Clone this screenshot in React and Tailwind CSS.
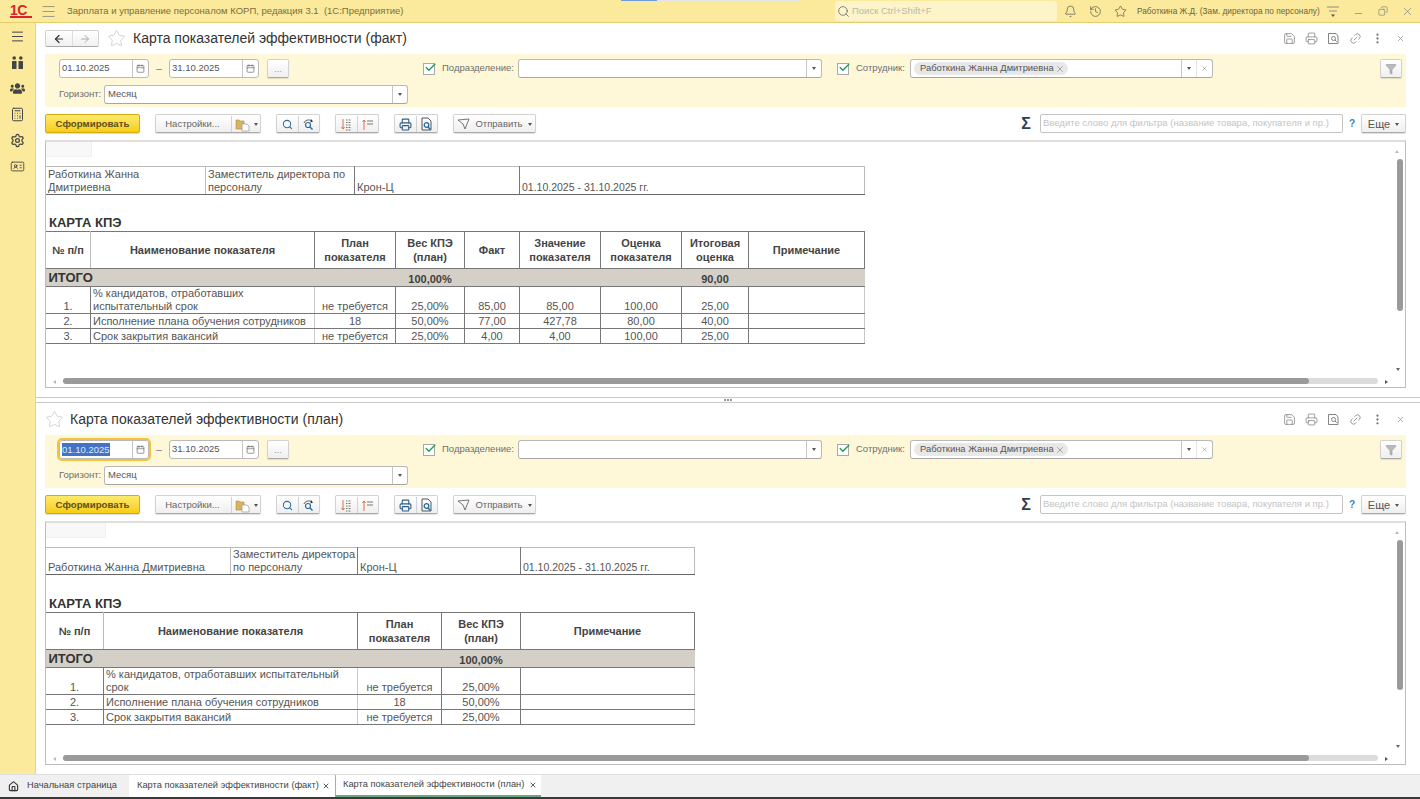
import React from "react";
import { Menu, Bell, History, Star, Search, Save, Printer, Link2, EllipsisVertical, X, Calendar, Funnel, House, ArrowLeft, ArrowRight, Minus, Copy, Calculator, Settings, IdCard, Check } from "lucide-react";
import { FaUsers } from "react-icons/fa";

const Caret = () => <span className="inline-block w-0 h-0 border-l-[2.5px] border-r-[2.5px] border-t-[3px] border-l-transparent border-r-transparent border-t-[#555]" />;

const Field = ({ cls, text, pill, clear }) => (
  <div className={`${cls} h-[19px] flex items-stretch bg-white rounded-[3px] border border-[#b9b9b9] border-b-[#a5a5a5] text-[9.5px] text-[#555]`}>
    <div className="flex-1 min-w-0 flex items-center pl-[2px]">
      {pill && (
        <span className="ml-[1px] h-[13px] pl-[6px] pr-[3px] rounded-full bg-[#e8e8e8] flex items-center gap-[1px] text-[9.4px] text-[#555] whitespace-nowrap">
          Работкина Жанна Дмитриевна <X size={10} strokeWidth={1.1} className="text-[#555]" />
        </span>
      )}
      {text && <span className="pl-[1px] whitespace-nowrap">{text}</span>}
    </div>
    <div className="w-[15px] border-l border-[#c5c5c5] flex items-center justify-center"><Caret /></div>
    {clear && (
      <div className="w-[16px] border-l border-[#e4e4e4] flex items-center justify-center"><X size={7} strokeWidth={1.6} className="text-[#777]" /></div>
    )}
  </div>
);

const DateField = ({ cls, value, focus }) => (
  <div className={`${cls} h-[19px] flex items-stretch bg-white rounded-[3px] border border-[#b9b9b9] text-[9.5px] text-[#555] ${focus ? "outline-2 outline-[#f5c33b]" : ""}`}>
    <div className="flex-1 flex items-center pl-[2px]">
      <span className={focus ? "bg-[#4472c4] text-[#dfe8fa] leading-[13px]" : ""}>{value}</span>
    </div>
    <div className="w-[16px] border-l border-[#c5c5c5] flex items-center justify-center"><Calendar size={9} strokeWidth={1.8} className="text-[#666]" /></div>
  </div>
);

const Check1 = ({ cls }) => (
  <div className={`${cls} w-[12px] h-[12px] bg-white border border-[#a9a9a9] relative shrink-0`}>
    <Check size={13} strokeWidth={2.4} className="absolute -top-[3px] left-0 text-[#1b9b52]" />
  </div>
);

const btn = "h-[19px] shrink-0 pt-[1px] rounded-[2px] border border-[#d2d2d2] border-b-[#a9a9a9] bg-gradient-to-b from-white to-[#efefef] shadow-[0_1px_1px_rgba(0,0,0,0.12)] flex text-[9.5px] text-[#666]";

const Pair = ({ cls, a, b }) => (
  <div className={`${btn} items-stretch ${cls}`}>
    <div className="flex-1 flex items-center justify-center">{a}</div>
    <div className="flex-1 border-l border-[#d2d2d2] flex items-center justify-center">{b}</div>
  </div>
);

const SortDown = () => (
  <svg width="13" height="13" viewBox="0 0 13 13" fill="none">
    <path d="M3 1v10M1.500 9 3 11l1.500-2" stroke="#e0703c" strokeWidth="1" />
    <path d="M6 2h5M6 4.500h5M6 7h5M6 9.500h5M6 12h5" stroke="#777" strokeWidth="1" strokeDasharray="1 0.500" />
  </svg>
);
const SortUp = () => (
  <svg width="13" height="13" viewBox="0 0 13 13" fill="none">
    <path d="M3 12V2M1.500 4 3 2l1.500 2" stroke="#e0703c" strokeWidth="1" />
    <path d="M6 3h6M6 6h6" stroke="#777" strokeWidth="1" />
  </svg>
);
const FolderDoc = () => (
  <svg width="15" height="15" viewBox="0 0 15 15" fill="none">
    <path d="M1 3h3l1 1h4v8H1z" fill="#d9b45f" stroke="#b08d3f" strokeWidth="0.600" />
    <path d="M7 7h5l2 2v5H7z" fill="#fff" stroke="#999" strokeWidth="0.700" />
  </svg>
);
const Refind = () => (
  <svg width="13" height="13" viewBox="0 0 13 13" fill="none">
    <circle cx="6" cy="7" r="2.500" stroke="#2c6c9c" strokeWidth="1.200" />
    <path d="m8 9 2.500 2.500" stroke="#2c6c9c" strokeWidth="1.400" />
    <path d="M2 5C3 2 7 1 10 3" stroke="#555" strokeWidth="1" />
    <path d="m9 1 2 2.500-2.500 1z" fill="#333" />
  </svg>
);
const PrintBlue = () => <Printer size={13} strokeWidth={2} className="text-[#2f5f88]" />;
const Preview = () => (
  <svg width="13" height="14" viewBox="0 0 13 14" fill="none">
    <path d="M2 1h6l3 3v9H2z" stroke="#555" strokeWidth="1" />
    <circle cx="6.500" cy="8" r="2.300" stroke="#1f6f9f" strokeWidth="1.300" />
    <path d="m8 10 2.500 2.500" stroke="#1f6f9f" strokeWidth="1.500" />
  </svg>
);
const PreviewGrey = () => (
  <svg width="13" height="13" viewBox="0 0 13 13" fill="none">
    <path d="M9 1.500H1.500v10H11V4z" stroke="#777" strokeWidth="0.900" />
    <circle cx="6.500" cy="6.500" r="2" stroke="#777" strokeWidth="0.900" />
    <path d="m8 8 1.800 1.800" stroke="#777" strokeWidth="0.900" />
  </svg>
);
const GiftIcon = () => (
  <svg width="15" height="15" viewBox="0 0 15 15" fill="#444">
    <rect x="2" y="6" width="4.500" height="8" rx="0.500" />
    <rect x="8.500" y="6" width="4.500" height="8" rx="0.500" />
    <circle cx="4.200" cy="3" r="1.800" />
    <circle cx="10.800" cy="3" r="1.800" />
  </svg>
);
const DownLines = () => (
  <svg width="12" height="14" viewBox="0 0 12 14" fill="none" stroke="#777" strokeWidth="0.800">
    <path d="M0 3h12M2 7h8" />
    <path d="M4 10.500h4L6 13z" fill="#555" stroke="none" />
  </svg>
);

const SendIcon = () => (
  <svg width="13" height="12" viewBox="0 0 13 12" fill="none"><path d="M1 2 12 1 8 11 6 6z" stroke="#666" strokeWidth="0.900" /></svg>
);

const Toolbar = () => (
  <div className="h-[19px] flex items-stretch">
    <div className="w-[95px] shrink-0 h-[19px] pt-[1px] rounded-[2px] border border-[#d3ac14] bg-gradient-to-b from-[#fdea6a] to-[#f7cd00] shadow-[0_1px_1px_rgba(0,0,0,0.15)] flex items-center justify-center text-[9.7px] text-[#5f5018] font-bold">Сформировать</div>
    <div className={`${btn} items-stretch ml-[15px] w-[106px]`}>
      <div className="w-[75px] pr-[2px] flex items-center justify-center">Настройки...</div>
      <div className="flex-1 border-l border-[#d2d2d2] flex items-center justify-center gap-[4px]"><FolderDoc /><Caret /></div>
    </div>
    <Pair cls="ml-[15px] w-[44px]" a={<Search size={11} strokeWidth={2.2} className="text-[#2c6c9c]" />} b={<Refind />} />
    <Pair cls="ml-[15px] w-[44px]" a={<SortDown />} b={<SortUp />} />
    <Pair cls="ml-[15px] w-[44px]" a={<PrintBlue />} b={<Preview />} />
    <div className={`${btn} items-center ml-[15px] w-[83px] justify-center gap-[5px]`}><SendIcon /><span>Отправить</span><Caret /></div>
    <div className="ml-[480px] w-[20px] shrink-0 flex items-center justify-center text-[16px] leading-none text-[#2f3f4f] font-semibold">Σ</div>
    <div className="ml-[4px] w-[303px] shrink-0 h-[19px] border border-[#c4c4c4] rounded-[2px] bg-white flex items-center pl-[2px] text-[9.5px] text-[#c4c4c4] whitespace-nowrap">Введите слово для фильтра (название товара, покупателя и пр.)</div>
    <div className="w-[18px] shrink-0 flex items-center justify-center text-[10px] font-bold text-[#3a7fc2]">?</div>
    <div className={`${btn} items-center w-[45px] justify-center gap-[5px]`}><span className="text-[11px] text-[#555]">Еще</span><Caret /></div>
  </div>
);

const Band = ({ focus }) => (
  <div className="h-[53px] bg-[#fef8d8] pt-[5px] pl-[14px] pr-[4px]">
    <div className="flex items-center h-[19px]">
      <DateField cls="w-[90px]" value="01.10.2025" focus={focus} />
      <span className="w-[20px] text-center text-[10px] text-[#777]">–</span>
      <DateField cls="w-[90px]" value="31.10.2025" />
      <div className={`${btn} items-center ml-[8px] w-[22px] justify-center text-[#999]`}>...</div>
      <Check1 cls="ml-[134px]" />
      <span className="ml-[7px] w-[76px] text-[9.5px] text-[#6f6f6f] whitespace-nowrap">Подразделение:</span>
      <Field cls="w-[304px]" />
      <Check1 cls="ml-[15px]" />
      <span className="ml-[7px] w-[54px] text-[9.5px] text-[#6f6f6f]">Сотрудник:</span>
      <Field cls="w-[303px]" pill clear />
      <div className={`${btn} items-center ml-[167px] w-[22px] justify-center`}><Funnel size={12} strokeWidth={1} className="text-[#888] fill-[#bbb]" /></div>
    </div>
    <div className="flex items-center h-[19px] mt-[7px]">
      <span className="w-[45px] text-[9.5px] text-[#6f6f6f]">Горизонт:</span>
      <Field cls="w-[304px]" text="Месяц" />
    </div>
  </div>
);

const bd = "border border-[#777]";
const bl = "border border-[#c9c9c9] border-b-[#777]";

const InfoTable = ({ widths, h, cells }) => (
  <table className="-ml-[1px] table-fixed border-collapse text-[11px] leading-[13px] text-[#555]">
    <colgroup>{widths.map((w) => <col key={w} className={w} />)}</colgroup>
    <tbody>
      <tr className={h}>
        {cells.map((c, i) => (
          <td key={i} className={`${i === 1 || i === 2 ? "border-t border-b border-x border-t-[#bbb] border-b-[#666] border-x-[#777]" : "border-t border-b border-x border-t-[#bbb] border-b-[#666] border-x-[#bbb]"} align-bottom px-[2px] pb-0`}>{c}</td>
        ))}
      </tr>
    </tbody>
  </table>
);

const KpiTable = ({ widths, head, total, rows }) => (
  <table className="-ml-[1px] table-fixed border-collapse text-[11px] leading-[13px] text-[#555]">
    <colgroup>{widths.map((w) => <col key={w} className={w} />)}</colgroup>
    <tbody>
      <tr className="h-[37px]">
        {head.map((c, i) => (
          <td key={i} className={`${bd} ${i === 0 ? "border-r-[#bbb]" : ""} text-center align-middle font-bold text-[#444] leading-[14px] px-[1px]`}>{c}</td>
        ))}
      </tr>
      <tr className="h-[18px] bg-[#d4d0c8]">
        {total.map((c, i) => (
          <td key={i} colSpan={c.span || 1} className={`border-t border-b border-[#777] align-bottom font-bold text-[#3f3f3f] ${c.big ? "text-[13px] leading-[16px] text-[#333] text-left pl-[3px]" : "text-center"}`}>{c.t}</td>
        ))}
      </tr>
      {rows.map((r, ri) => (
        <tr key={ri} className={ri === 0 ? "h-[27px]" : "h-[15px]"}>
          {r.map((c, i) => (
            <td key={i} className={`${bl} ${i > 1 && i < r.length - 1 ? "border-x-[#777]" : ""} ${i === 0 ? "border-r-[#777]" : ""} ${ri === 2 ? "border-b-[#666]" : ""} ${i === 1 ? "text-left pl-[2px]" : "text-center"} align-bottom`}>{c}</td>
          ))}
        </tr>
      ))}
    </tbody>
  </table>
);

const Scrollbars = ({ vThumb }) => (
  <>
    <div className="absolute top-[8px] right-[6px] w-0 h-0 border-l-[2px] border-r-[2px] border-b-[3px] border-l-transparent border-r-transparent border-b-[#bbb]" />
    <div className={`absolute top-[17px] right-[2px] w-[6px] ${vThumb} rounded-full bg-[#9a9a9a]`} />
    <div className="absolute bottom-[16px] right-[5px] w-0 h-0 border-l-[2.5px] border-r-[2.5px] border-t-[3px] border-l-transparent border-r-transparent border-t-[#666]" />
    <div className="absolute bottom-[3px] left-[7px] w-0 h-0 border-t-[2px] border-b-[2px] border-r-[3px] border-t-transparent border-b-transparent border-r-[#bbb]" />
    <div className="absolute bottom-[3px] left-[17px] w-[1315px] h-[6px] rounded-full bg-[#dcdcdc]">
      <div className="w-[1246px] h-[6px] rounded-full bg-[#9a9a9a]" />
    </div>
    <div className="absolute bottom-[3px] right-[17px] w-0 h-0 border-t-[2.5px] border-b-[2.5px] border-l-[3px] border-t-transparent border-b-transparent border-l-[#555]" />
  </>
);

const Frame = ({ cls, boxCls, vThumb, children }) => (
  <div className={`${cls} relative overflow-hidden border border-[#bdbdbd] border-t-2 border-t-[#dedede] bg-white`}>
    <div className={`${boxCls} h-[15px] bg-[#f8f8f8] border-r border-b border-[#f0f0f0]`} />
    {children}
    <Scrollbars vThumb={vThumb} />
  </div>
);

const HeadIcons = () => (
  <div className="ml-auto flex items-center gap-[9px] text-[#777]">
    <Save size={13} strokeWidth={1.3} />
    <Printer size={13} strokeWidth={1.3} />
    <PreviewGrey />
    <Link2 size={13} strokeWidth={1.3} className="-rotate-45" />
    <EllipsisVertical size={13} strokeWidth={2.2} />
    <X size={9} strokeWidth={1.5} className="ml-[3px] mr-[1px]" />
  </div>
);

const NavButtons = () => (
  <div className="w-[54px] h-[17px] rounded-[2px] border border-[#d2d2d2] border-b-[#a9a9a9] bg-gradient-to-b from-white to-[#f0f0f0] flex">
    <div className="flex-1 flex items-center justify-center"><ArrowLeft size={12} strokeWidth={2.4} className="text-[#333]" /></div>
    <div className="flex-1 border-l border-[#ddd] flex items-center justify-center"><ArrowRight size={12} strokeWidth={2} className="text-[#aaa]" /></div>
  </div>
);

const rows1 = [
  ["1.", "% кандидатов, отработавших испытательный срок", "не требуется", "25,00%", "85,00", "85,00", "100,00", "25,00", ""],
  ["2.", "Исполнение плана обучения сотрудников", "18", "50,00%", "77,00", "427,78", "80,00", "40,00", ""],
  ["3.", "Срок закрытия вакансий", "не требуется", "25,00%", "4,00", "4,00", "100,00", "25,00", ""],
];
const rows2 = rows1.map((r) => [r[0], r[1], r[2], r[3], ""]);
const period = <span className="text-[10.5px]">01.10.2025 - 31.10.2025 гг.</span>;

export default function App() {
  return (
    <div className="w-[1420px] h-[799px] flex flex-col overflow-hidden bg-white font-['Liberation_Sans','Arial',sans-serif]">
      <header className="h-[23px] shrink-0 relative bg-[#fbe99c] border-b border-[#e3cf6e] flex items-center">
        <div className="absolute top-0 left-[621px] w-[36px] h-[1px] bg-[#6f9bd8]" />
        <div className="absolute top-0 left-[657px] w-[143px] h-[1px] bg-[#e4e4e4]" />
        <div className="ml-[10px] w-[22px] shrink-0 text-[14px] leading-[13px] font-bold text-[#d9252a] border-b-2 border-[#d9252a] h-[14px] tracking-[-0.5px]">1С</div>
        <Menu size={17} strokeWidth={1} className="ml-[8px] shrink-0 text-[#777]" />
        <span className="ml-[10px] w-[500px] shrink-0 text-[9.5px] text-[#7a6f3c] whitespace-pre">Зарплата и управление персоналом КОРП, редакция 3.1  (1С:Предприятие)</span>
        <div className="ml-[268px] w-[222px] shrink-0 h-[20px] rounded-[3px] bg-[#fdf5c9] flex items-center pl-[2px] gap-[2px]">
          <Search size={13} strokeWidth={1.3} className="text-[#555]" />
          <span className="text-[9.5px] text-[#b9b9a8]">Поиск Ctrl+Shift+F</span>
        </div>
        <Bell size={13} strokeWidth={1.3} className="ml-[7px] shrink-0 text-[#555]" />
        <History size={13} strokeWidth={1.3} className="ml-[12px] shrink-0 text-[#555]" />
        <Star size={13} strokeWidth={1.3} className="ml-[12px] shrink-0 text-[#555]" />
        <span className="ml-[10px] w-[190px] shrink-0 text-[8.3px] text-[#6f6538] whitespace-nowrap">Работкина Ж.Д. (Зам. директора по персоналу)</span>
        <span className="shrink-0"><DownLines /></span>
        <Minus size={11} strokeWidth={1.2} className="ml-[14px] mt-[4px] shrink-0 text-[#666]" />
        <Copy size={10} strokeWidth={1.3} className="ml-[14px] shrink-0 text-[#666] -scale-x-100" />
        <X size={13} strokeWidth={1} className="ml-[13px] shrink-0 text-[#666]" />
      </header>

      <div className="flex-1 min-h-0 flex">
        <aside className="w-[36px] shrink-0 bg-[#fbe99c] border-r border-[#e5d58c] flex flex-col items-center pt-[6px] gap-[11px] text-[#444]">
          <Menu size={15} strokeWidth={1.6} />
          <GiftIcon />
          <FaUsers size={15} />
          <Calculator size={15} strokeWidth={1.6} />
          <Settings size={15} strokeWidth={2} />
          <IdCard size={15} strokeWidth={1.4} />
        </aside>

        <main className="flex-1 min-w-0 flex flex-col">
          <section className="h-[374px] shrink-0 pl-[9px] pr-[14px]">
            <div className="h-[31px] flex items-center">
              <NavButtons />
              <Star size={19} strokeWidth={0.8} className="ml-[8px] text-[#bbb]" />
              <span className="ml-[7px] text-[14px] text-[#333]">Карта показателей эффективности (факт)</span>
              <HeadIcons />
            </div>
            <Band />
            <div className="mt-[7px]"><Toolbar /></div>
            <Frame cls="mt-[7px] h-[248px]" boxCls="w-[46px]" vThumb="h-[152px]">
              <div className="mt-[9px]">
                <InfoTable
                  widths={["w-[160px]", "w-[149px]", "w-[165px]", "w-[345px]"]}
                  h="h-[28px]"
                  cells={["Работкина Жанна Дмитриевна", "Заместитель директора по персоналу", "Крон-Ц", period]}
                />
              </div>
              <div className="h-[36px] flex items-end pl-[3px] pb-[1px] text-[13px] leading-[15px] font-bold text-[#333]">КАРТА КПЭ</div>
              <KpiTable
                widths={["w-[45px]", "w-[224px]", "w-[81px]", "w-[69px]", "w-[55px]", "w-[81px]", "w-[81px]", "w-[67px]", "w-[116px]"]}
                head={["№ п/п", "Наименование показателя", "План показателя", "Вес КПЭ (план)", "Факт", "Значение показателя", "Оценка показателя", "Итоговая оценка", "Примечание"]}
                total={[{ t: "ИТОГО", span: 3, big: true }, { t: "100,00%" }, { t: "", span: 3 }, { t: "90,00" }, { t: "" }]}
                rows={rows1}
              />
            </Frame>
          </section>

          <div className="h-[6px] shrink-0 border-t border-b border-[#c8c8c8] flex items-center justify-center gap-[1px]">
            <span className="w-[2px] h-[2px] bg-[#999]" /><span className="w-[2px] h-[2px] bg-[#999]" /><span className="w-[2px] h-[2px] bg-[#999]" />
          </div>

          <section className="flex-1 min-h-0 pl-[9px] pr-[14px]">
            <div className="h-[32px] flex items-center">
              <Star size={19} strokeWidth={0.8} className="text-[#bbb]" />
              <span className="ml-[6px] text-[14px] text-[#333]">Карта показателей эффективности (план)</span>
              <HeadIcons />
            </div>
            <Band focus />
            <div className="mt-[7px]"><Toolbar /></div>
            <Frame cls="mt-[7px] h-[244px]" boxCls="w-[60px]" vThumb="h-[150px]">
              <div className="mt-[9px]">
                <InfoTable
                  widths={["w-[185px]", "w-[127px]", "w-[163px]", "w-[174px]"]}
                  h="h-[27px]"
                  cells={["Работкина Жанна Дмитриевна", "Заместитель директора по персоналу", "Крон-Ц", period]}
                />
              </div>
              <div className="h-[37px] flex items-end pl-[3px] pb-[1px] text-[13px] leading-[15px] font-bold text-[#333]">КАРТА КПЭ</div>
              <KpiTable
                widths={["w-[58px]", "w-[254px]", "w-[84px]", "w-[79px]", "w-[174px]"]}
                head={["№ п/п", "Наименование показателя", "План показателя", "Вес КПЭ (план)", "Примечание"]}
                total={[{ t: "ИТОГО", span: 3, big: true }, { t: "100,00%" }, { t: "" }]}
                rows={rows2}
              />
            </Frame>
          </section>
        </main>
      </div>

      <footer className="h-[25px] shrink-0 bg-[#f0f0f0] border-t border-[#dedede] border-b-2 border-b-[#3a3a3a] flex items-stretch text-[9.3px] text-[#444]">
        <div className="w-[129px] flex items-center pl-[8px] gap-[8px]">
          <House size={11} strokeWidth={2.4} className="text-[#333]" />
          <span className="whitespace-nowrap">Начальная страница</span>
        </div>
        <div className="w-[206px] bg-white flex items-center pl-[8px] whitespace-nowrap">
          <span className="w-[185px]">Карта показателей эффективности (факт)</span>
          <X size={8} strokeWidth={2.4} className="text-[#333]" />
        </div>
        <div className="w-[206px] bg-white border-l border-[#aaa] border-b-2 border-b-[#6fa87f] flex items-center pl-[7px] whitespace-nowrap">
          <span className="w-[186px]">Карта показателей эффективности (план)</span>
          <X size={8} strokeWidth={2.4} className="text-[#333]" />
        </div>
      </footer>
    </div>
  );
}
